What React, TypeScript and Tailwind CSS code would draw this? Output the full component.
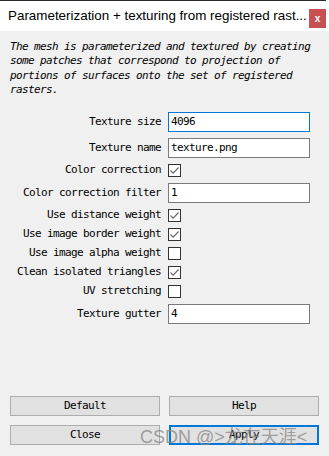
import React from "react";

const mono = { fontFamily: '"DejaVu Sans Mono", "Liberation Mono", monospace' };

function Check({ checked }: { checked: boolean }) {
  return (
    <div className="w-[13px] h-[13px] border border-[#333333] bg-white flex items-center justify-center">
      {checked && (
        <svg width="11" height="11" viewBox="0 0 11 11">
          <path d="M1.5 5.5 L4.2 8.2 L9.5 2.5" fill="none" stroke="#6b6b6b" strokeWidth="1.2" />
        </svg>
      )}
    </div>
  );
}

function Label({ children }: { children: React.ReactNode }) {
  return (
    <div className="w-[161px] text-right whitespace-nowrap text-[11px] tracking-[-0.62px] text-black" style={mono}>
      {children}
    </div>
  );
}

function InputRow({ label, value, focused }: { label: string; value: string; focused?: boolean }) {
  return (
    <div className="flex items-center h-[20px]">
      <Label>{label}</Label>
      <div
        className={
          "ml-[7px] w-[142px] h-[20px] bg-white flex items-center px-[2px] text-[11px] tracking-[-0.62px] text-black " +
          (focused ? "border border-[#0078d7]" : "border border-[#7a7a7a]")
        }
        style={mono}
      >
        {value}
      </div>
    </div>
  );
}

function CheckRow({ label, checked }: { label: string; checked: boolean }) {
  return (
    <div className="flex items-center h-[13px]">
      <Label>{label}</Label>
      <div className="ml-[7px]">
        <Check checked={checked} />
      </div>
    </div>
  );
}

function Btn({ children, focused }: { children: React.ReactNode; focused?: boolean }) {
  return (
    <div
      className={
        "h-[20px] flex items-center justify-center bg-[#e1e1e1] text-[11px] tracking-[-0.62px] text-black " +
        (focused ? "border-2 border-[#0078d7]" : "border border-[#adadad]")
      }
      style={mono}
    >
      {children}
    </div>
  );
}

export default function App() {
  return (
    <div className="relative w-[329px] h-[456px] bg-[#f0f0f0] flex flex-col overflow-hidden">
      <div className="h-[31px] bg-white flex flex-col shrink-0">
        <div className="h-px w-[326px] bg-[#2b2b2b]" />
        <div className="flex-1 flex items-center pl-[8px] relative">
          <span
            className="text-[13.4px] text-black whitespace-nowrap"
            style={{ fontFamily: '"Liberation Sans", Arial, sans-serif' }}
          >
            Parameterization + texturing from registered rast...
          </span>
          <div className="absolute left-[309px] top-[8px] w-[17px] h-[19px] bg-[#c75050] flex items-center justify-center text-white text-[10px] font-bold"
            style={{ fontFamily: '"Liberation Sans", Arial, sans-serif' }}>
            x
          </div>
        </div>
      </div>

      <div
        className="pt-[9px] pl-[10px] pr-[8px] text-[11px] tracking-[-0.62px] leading-[14.3px] italic text-black"
        style={mono}
      >
        <div className="whitespace-nowrap">The mesh is parameterized and textured by creating</div>
        <div className="whitespace-nowrap">some patches that correspond to projection of</div>
        <div className="whitespace-nowrap">portions of surfaces onto the set of registered</div>
        <div className="whitespace-nowrap">rasters.</div>
      </div>

      <div className="mt-[15px] flex flex-col gap-[6px]">
        <InputRow label="Texture size" value="4096" focused />
        <InputRow label="Texture name" value="texture.png" />
        <CheckRow label="Color correction" checked />
        <InputRow label="Color correction filter" value="1" />
        <CheckRow label="Use distance weight" checked />
        <CheckRow label="Use image border weight" checked />
        <CheckRow label="Use image alpha weight" checked={false} />
        <CheckRow label="Clean isolated triangles" checked />
        <CheckRow label="UV stretching" checked={false} />
        <InputRow label="Texture gutter" value="4" />
      </div>

      <div className="flex-1" />

      <div className="pl-[10px] pr-[11px] pb-[11px] grid grid-cols-[150px_150px] gap-x-[9px] gap-y-[9px]">
        <Btn>Default</Btn>
        <Btn>Help</Btn>
        <Btn>Close</Btn>
        <Btn focused>Apply</Btn>
      </div>

      <div
        className="absolute left-[140px] top-[424px] text-[18px] text-[#8a8a8a]/80 whitespace-nowrap pointer-events-none"
        style={{ fontFamily: '"Liberation Sans", "Noto Sans CJK SC", sans-serif' }}
      >
        CSDN @&gt;龙在天涯&lt;
      </div>
    </div>
  );
}
